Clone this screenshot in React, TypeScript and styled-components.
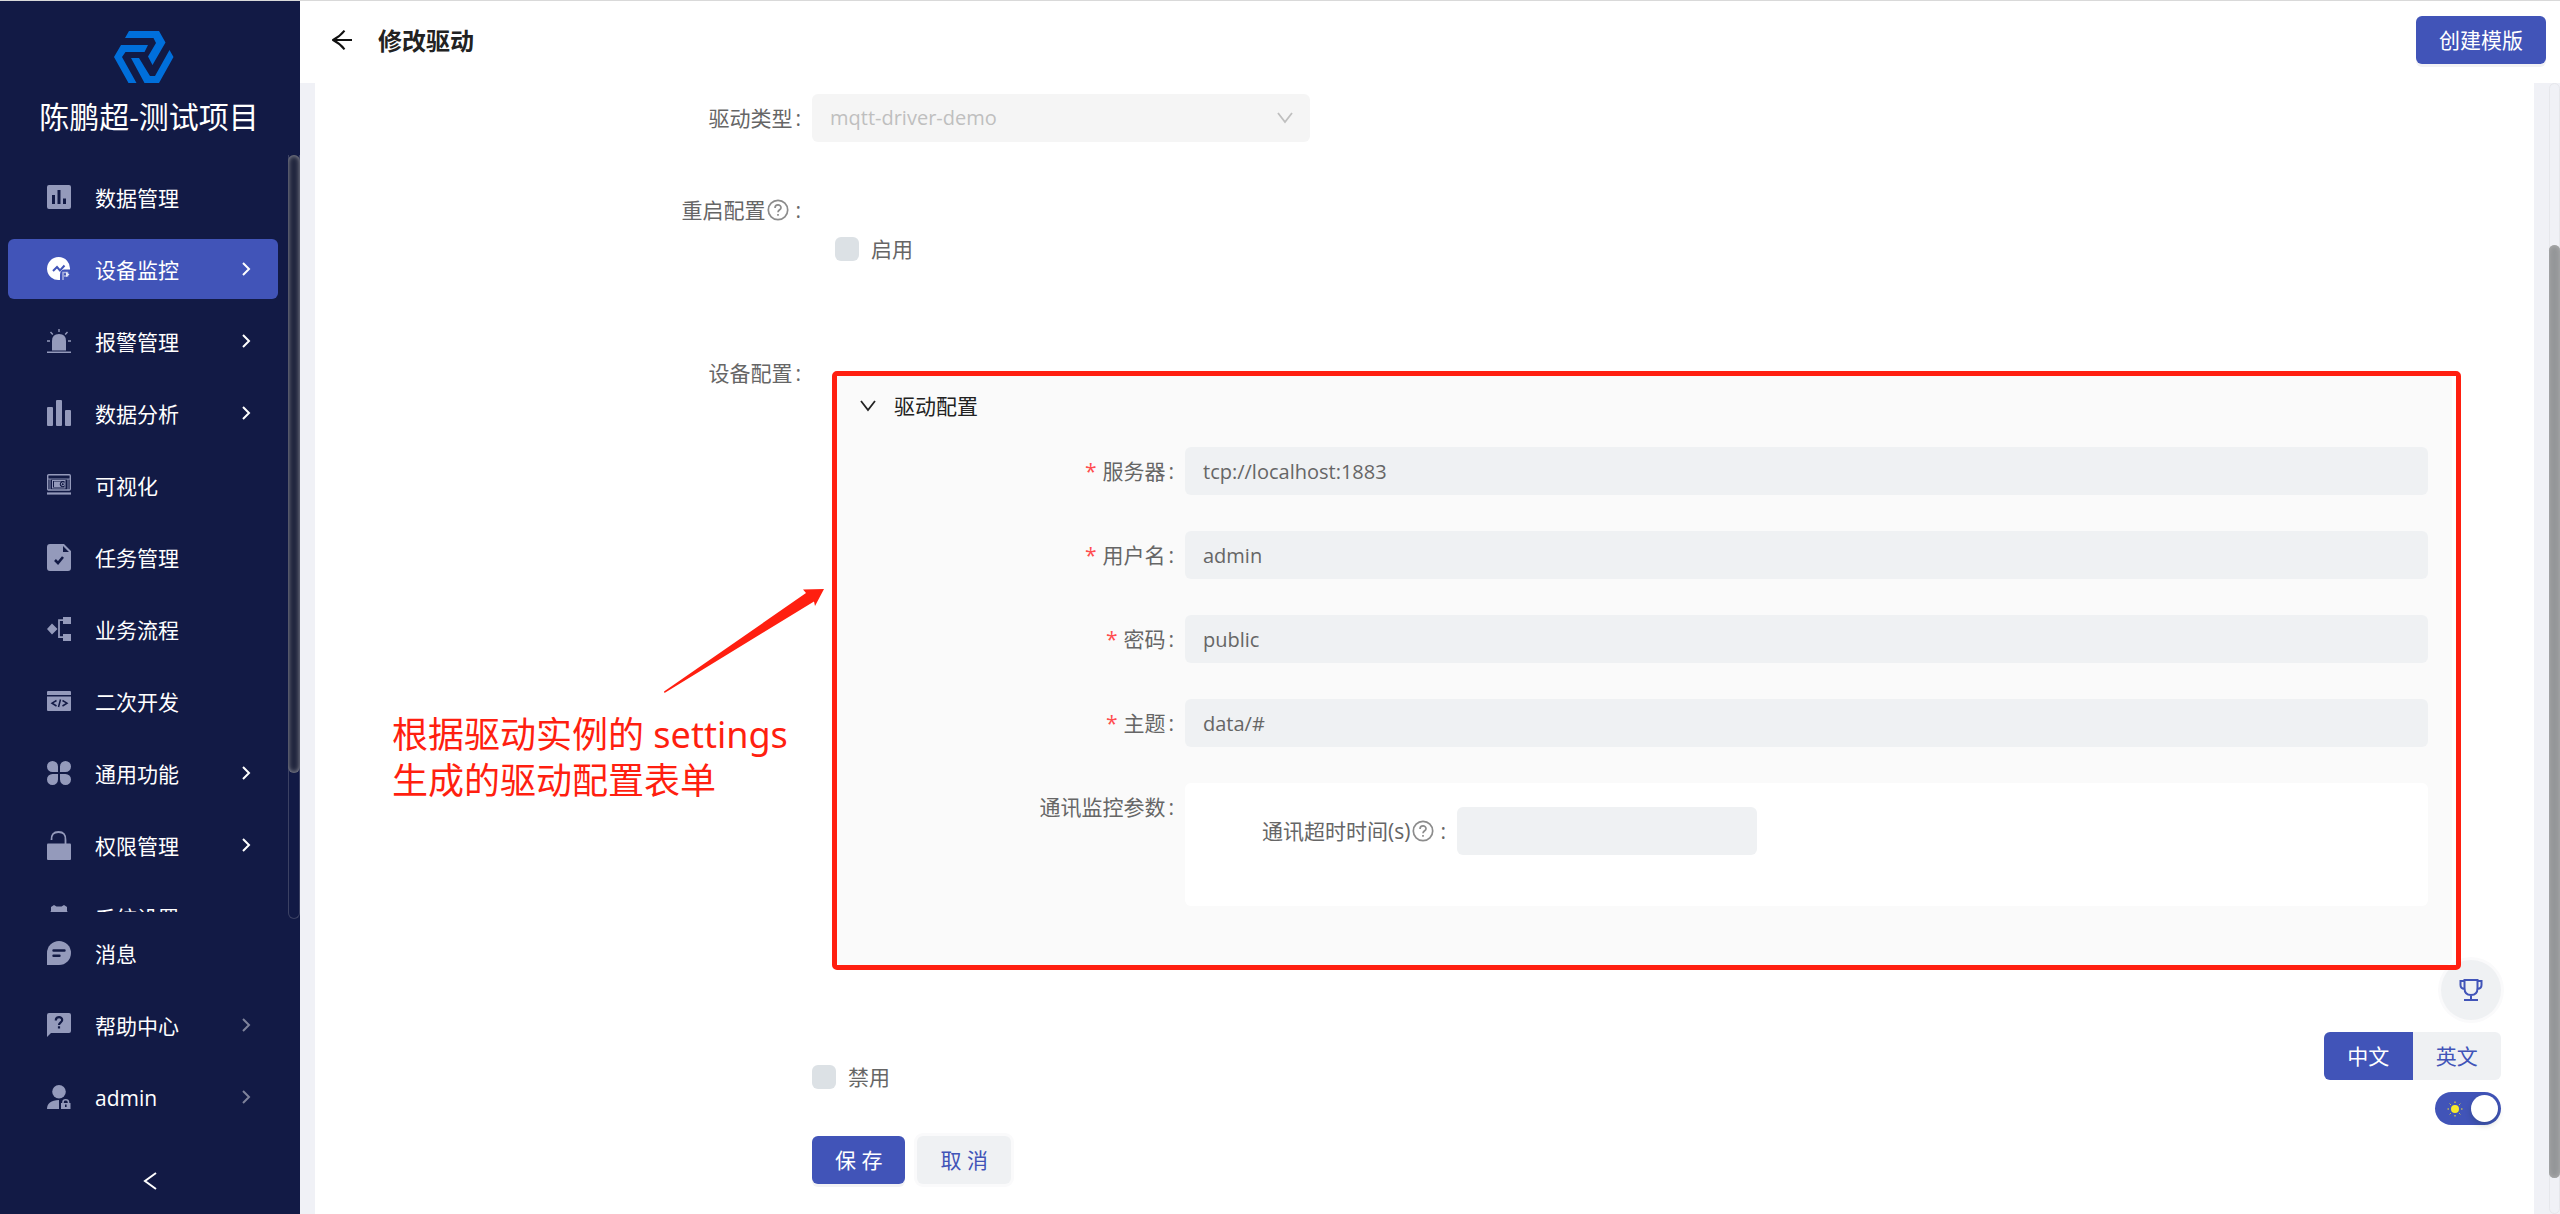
import React from "react";
import styled, { createGlobalStyle, css } from "styled-components";

const color = {
  navy: "#121a45",
  primary: "#4154b8",
  icon: "#949abb",
  page: "#f0f1f6",
  field: "#eff1f3",
  text: "#666666",
  heading: "#222222",
  mark: "#ff1f10",
};

const GlobalStyle = createGlobalStyle`
  *, *::before, *::after { box-sizing: border-box; }
  body {
    margin: 0;
    background: #fff;
    color: ${color.text};
    font-family: "Open Sans", "Noto Sans CJK SC", sans-serif;
    font-size: 21px;
    line-height: 32px;
  }
  button, input, select { font: inherit; color: inherit; margin: 0; }
  button { cursor: pointer; }
  svg { display: block; flex: none; }
`;

/* ---------- shell ---------- */

const Shell = styled.div`
  display: flex;
  height: 100vh;
  border-top: 1px solid #d9d9d9;
  overflow: hidden;
`;

const Sidebar = styled.aside`
  flex: 0 0 300px;
  display: flex;
  flex-direction: column;
  background: ${color.navy};
  color: #fff;
`;

const Brand = styled.div`
  display: flex;
  flex-direction: column;
  align-items: center;
  gap: 12px;
  height: 154px;
  padding: 30px 2px 0 0;
`;

const BrandName = styled.div`
  font-size: 30px;
  line-height: 44px;
  white-space: nowrap;
`;

const NavArea = styled.div`
  flex: 1;
  min-height: 0;
  display: flex;
`;

const MenuList = styled.nav`
  flex: 1;
  display: flex;
  flex-direction: column;
  gap: 12px;
  padding: 12px 10px 0 8px;
  overflow: hidden;
`;

const MenuItem = styled.a<{ $active?: boolean }>`
  flex: 0 0 60px;
  display: flex;
  align-items: center;
  padding: 0 27px 0 39px;
  border-radius: 6px;
  color: #fff;
  text-decoration: none;
  white-space: nowrap;
  background: ${(p) => (p.$active ? color.primary : "transparent")};
`;

const MenuIcon = styled.span<{ $active?: boolean }>`
  width: 24px;
  color: ${(p) => (p.$active ? "#fff" : color.icon)};
`;

const MenuText = styled.span`
  flex: 1;
  margin-left: 24px;
  padding-top: 2px;
`;

const NavTrack = styled.div`
  flex: 0 0 12px;
  display: flex;
  flex-direction: column;
  border: 1px solid #3b4163;
  border-top: 0;
  border-radius: 0 0 6px 6px;
  margin-bottom: -7px;
`;

const NavThumb = styled.div`
  flex: 0 0 81%;
  margin: 0 -1px;
  border-radius: 6px;
  background: #22273f;
  box-shadow: inset 0 0 5px #a0a0a8;
`;

const MenuFooter = styled.div`
  display: flex;
  flex-direction: column;
  gap: 12px;
  padding: 11px 22px 0 8px;
`;

const Collapse = styled.button`
  height: 75px;
  border: 0;
  background: transparent;
  color: #fff;
  display: flex;
  align-items: center;
  justify-content: center;
  padding: 9px 0 0 14px;
`;

const Main = styled.main`
  flex: 1;
  min-width: 0;
  display: flex;
  flex-direction: column;
`;

const Header = styled.header`
  flex: 0 0 82px;
  display: flex;
  align-items: center;
  padding: 0 14px 4px 32px;
  background: #fff;
`;

const BackButton = styled.button`
  border: 0;
  padding: 0;
  background: transparent;
  color: #111;
`;

const Title = styled.h1`
  flex: 1;
  margin: 0 0 0 26px;
  padding-top: 2px;
  font-size: 24px;
  font-weight: 700;
  color: ${color.heading};
`;

const Button = styled.button<{ $primary?: boolean }>`
  height: 48px;
  padding: 0 23px;
  border: 0;
  border-radius: 6px;
  white-space: nowrap;
  background: ${(p) => (p.$primary ? color.primary : color.field)};
  color: ${(p) => (p.$primary ? "#fff" : color.primary)};
  box-shadow: ${(p) => (p.$primary ? "0 3px 0 #f2f2f4" : "0 0 0 3px #fafafb")};
`;

const Body = styled.div`
  flex: 1;
  min-height: 0;
  display: flex;
  background: ${color.page};
`;

const Sheet = styled.form`
  flex: 1;
  min-width: 0;
  display: flex;
  flex-direction: column;
  gap: 44px;
  margin: 0 15px;
  padding: 11px 0;
  background: #fff;
`;

const PageTrack = styled.div`
  flex: 0 0 11px;
  display: flex;
  flex-direction: column;
  border: 1px solid #e6e7eb;
  border-radius: 6px;
`;

const PageThumb = styled.div`
  flex: 935;
  margin: 0 -1px;
  border-radius: 6px;
  background: #949698;
  box-shadow: inset 0 0 5px #b0b0b0;
`;

const Spacer = styled.div<{ $grow: number }>`
  flex: ${(p) => p.$grow};
`;

/* ---------- form ---------- */

const Row = styled.div<{ $label?: number }>`
  display: grid;
  grid-template-columns: minmax(180px, ${(p) => p.$label ?? 497}px) minmax(0, 1fr);
`;

const labelStyle = css`
  height: 48px;
  display: flex;
  align-items: center;
  justify-content: flex-end;
  padding-right: 11px;
  white-space: nowrap;
`;

const FieldLabel = styled.label`
  ${labelStyle}
`;

const FieldCaption = styled.span`
  ${labelStyle}
`;

const Required = styled.span`
  margin-right: 6px;
  color: #ff4d4f;
`;

const Colon = styled.span`
  margin-left: 3px;
`;

const HelpMark = styled.span`
  margin: 0 3px 0 2px;
  color: #8c8c8c;
`;

const SelectBox = styled.div`
  display: flex;
  align-items: center;
  width: 498px;
  height: 48px;
  padding-right: 17px;
  border-radius: 6px;
  background: #f5f5f5;
  color: #bfbfbf;
`;

const Select = styled.select`
  flex: 1;
  height: 48px;
  padding: 0 18px;
  border: 0;
  background: transparent;
  appearance: none;
  font-size: 20px;
  color: #bfbfbf;
  opacity: 1;
`;

const Input = styled.input`
  width: 100%;
  height: 48px;
  padding: 0 18px;
  border: 0;
  border-radius: 6px;
  background: ${color.field};
  font-size: 20px;
`;

const CheckLabel = styled.label`
  display: flex;
  align-items: center;
  gap: 12px;
  height: 48px;
`;

const Check = styled.input`
  appearance: none;
  width: 24px;
  height: 24px;
  border-radius: 6px;
  background: #dce1e5;
`;

const RestartBody = styled.div`
  padding: 39px 0 32px 23px;
`;

const PanelArea = styled.div`
  padding: 24px 82px 44px 24px;
`;

const Panel = styled.section`
  position: relative;
  border-radius: 6px;
  background: #fafafa;
  color: ${color.text};
`;

const PanelHead = styled.button`
  display: flex;
  align-items: center;
  gap: 18px;
  width: 100%;
  height: 66px;
  padding: 0 24px;
  border: 0;
  background: transparent;
  color: ${color.heading};
  text-align: left;
`;

const PanelBody = styled.div`
  display: flex;
  flex-direction: column;
  gap: 36px;
  padding: 8px 24px 59px 0;
`;

const SubCard = styled.div`
  padding: 24px 24px 51px 0;
  border-radius: 6px;
  background: #fff;
`;

const ShortField = styled.div`
  width: 300px;
`;

const Actions = styled.div`
  display: flex;
  flex-direction: column;
  gap: 35px;
`;

const ButtonRow = styled.div`
  display: flex;
  gap: 12px;
`;

/* ---------- red callout laid over the form ---------- */

const Outline = styled.div`
  position: absolute;
  z-index: 10;
  inset: -2px -9px -5px -4px;
  border: 5px solid ${color.mark};
  border-radius: 5px;
  pointer-events: none;
`;

const Arrow = styled.svg`
  position: absolute;
  left: -172px;
  top: 215px;
`;

const Note = styled.p`
  position: absolute;
  left: -444px;
  top: 339px;
  margin: 0;
  font-family: "Noto Sans", "Noto Sans CJK SC", sans-serif;
  font-size: 36px;
  line-height: 46px;
  white-space: nowrap;
  color: ${color.mark};
`;

/* ---------- floating tools ---------- */

const Floating = styled.div`
  position: fixed;
  z-index: 5;
  right: 59px;
  bottom: 89px;
  display: flex;
  flex-direction: column;
  align-items: flex-end;
  gap: 12px;
`;

const RoundButton = styled.button`
  width: 60px;
  height: 60px;
  display: flex;
  align-items: center;
  justify-content: center;
  border: 0;
  border-radius: 50%;
  background: ${color.field};
  color: ${color.primary};
  box-shadow: 0 0 0 3px #fafafb;
`;

const LangGroup = styled.div`
  display: flex;
  width: 177px;
  border-radius: 6px;
  overflow: hidden;
`;

const LangButton = styled.button<{ $on?: boolean }>`
  flex: 1;
  height: 48px;
  padding: 0;
  border: 0;
  background: ${(p) => (p.$on ? color.primary : color.field)};
  color: ${(p) => (p.$on ? "#fff" : color.primary)};
`;

const Switch = styled.button`
  width: 66px;
  height: 33px;
  display: flex;
  align-items: center;
  justify-content: space-between;
  padding: 0 3px 0 12px;
  border: 0;
  border-radius: 17px;
  background: ${color.primary};
`;

const Knob = styled.span`
  width: 27px;
  height: 27px;
  border-radius: 50%;
  background: #fff;
  box-shadow: 0 3px 6px rgba(0, 35, 11, 0.2);
`;

/* ---------- drawings ---------- */

const Logo = () => (
  <svg width="70" height="52" viewBox="0 0 70 52" fill="#006fdb">
    <path d="M15 0H45L51.500 11.500L38.500 34L34 25.500L42 12L39.500 7H11Z" />
    <path d="M7 14H34L30.500 21H11.500L8 26L22.500 52H14.500L0 26Z" />
    <path d="M17 27H25L36 45H41L55.500 19L59.500 26L45 52H30.500Z" />
  </svg>
);

const Chevron = ({ tone = "#fff" }: { tone?: string }) => (
  <svg width="10" height="14" viewBox="0 0 10 14" fill="none" stroke={tone} strokeWidth="2">
    <path d="M2 1L8 7L2 13" />
  </svg>
);

const Down = () => (
  <svg width="16" height="16" viewBox="0 0 16 16" fill="none" stroke="currentColor" strokeWidth="1.800">
    <path d="M1 3L8 12L15 3" />
  </svg>
);

const Question = () => (
  <svg width="22" height="22" viewBox="0 0 22 22" fill="none" stroke="currentColor" strokeWidth="1.700">
    <circle cx="11" cy="11" r="9.700" />
    <path d="M8 9C8 5 14 5 14 8.700C14 10.800 11 10.800 11 13.300" />
    <path d="M11 15V16.800" />
  </svg>
);

const icons: Record<string, React.ReactNode> = {
  data: (
    <svg width="24" height="24" viewBox="0 0 24 24" fill="currentColor">
      <path fillRule="evenodd" d="M2 0H22Q24 0 24 2V22Q24 24 22 24H2Q0 24 0 22V2Q0 0 2 0ZM5 10V19H8V10ZM10.500 5V19H13.500V5ZM16 13.500V19H19V13.500Z" />
    </svg>
  ),
  device: (
    <svg width="24" height="24" viewBox="0 0 24 24" fill="none">
      <path fill="currentColor" d="M13 23A11.500 11.500 0 1 1 23 12.500H17Q13 13 13 18Z" />
      <path d="M6 14L10 10L13 13.500L17.500 8.500" stroke={color.primary} strokeWidth="2" />
      <path d="M16 23V15.500H20.500V19H17" stroke="#aab3de" strokeWidth="1.500" />
      <path d="M19 15L22.500 17.500L19 20Z" fill="#e5e8f6" />
    </svg>
  ),
  alarm: (
    <svg width="24" height="24" viewBox="0 0 24 24" fill="none" stroke="currentColor" strokeWidth="1.400">
      <path fill="currentColor" stroke="none" d="M5 21.500V12Q5 5 12 5T19 12V21.500Z" />
      <path d="M0 23.200H24M12 0V3M3.500 3L5.800 5.500M20.500 3L18.200 5.500M0 12H3M21 12H24" />
    </svg>
  ),
  chart: (
    <svg width="24" height="26" viewBox="0 0 24 26" fill="currentColor">
      <rect y="7" width="6" height="19" rx="1" />
      <rect x="9" width="6" height="26" rx="1" />
      <rect x="18" y="10" width="6" height="16" rx="1" />
    </svg>
  ),
  visual: (
    <svg width="24" height="22" viewBox="0 0 24 22" fill="none" stroke="currentColor">
      <rect x="0.700" y="0.700" width="22.600" height="15.300" rx="1" strokeWidth="1.400" />
      <path d="M1 5H23M3 5V16M21 5V16" strokeWidth="0.900" />
      <rect x="5.500" y="6.500" width="12.500" height="7.500" strokeWidth="1" />
      <path fill="currentColor" stroke="none" d="M7 7.500H14.500A3 3 0 0 0 14.500 13H7Z" />
      <circle cx="15.800" cy="10.200" r="1.500" strokeWidth="1" />
      <path d="M0 19.500H24" strokeWidth="2.200" />
    </svg>
  ),
  task: (
    <svg width="24" height="27" viewBox="0 0 24 27" fill="none">
      <path fill="currentColor" fillRule="evenodd" d="M3 0H17L24 7V24Q24 27 21 27H3Q0 27 0 24V3Q0 0 3 0ZM16 2V8H22Z" />
      <path d="M8 16L11 19L16 13" stroke={color.navy} strokeWidth="2.600" />
    </svg>
  ),
  flow: (
    <svg width="24" height="24" viewBox="0 0 24 24" fill="currentColor">
      <path d="M5 6.500L10.500 12L5 17.500L0 12ZM16 0H24V7H16ZM16 17H24V24H16Z" />
      <path d="M16 3.200H12V20.200H16" fill="none" stroke="currentColor" strokeWidth="1.800" />
    </svg>
  ),
  code: (
    <svg width="24" height="20" viewBox="0 0 24 20" fill="none">
      <path fill="currentColor" d="M1 0H23Q24 0 24 1V4H0V1Q0 0 1 0ZM0 5.500H24V19Q24 20 23 20H1Q0 20 0 19Z" />
      <path d="M9.500 9.500L5 12.200L9.500 15M15.500 9.500L20 12.200L15.500 15M13.500 8.500L11.500 16" stroke={color.navy} strokeWidth="1.500" />
    </svg>
  ),
  clover: (
    <svg width="24" height="24" viewBox="0 0 24 24" fill="currentColor">
      <path d="M5.500 0A5.500 5.500 0 0 1 11 5.500V11H5.500A5.500 5.500 0 0 1 5.500 0ZM18.500 0A5.500 5.500 0 0 1 18.500 11H13V5.500A5.500 5.500 0 0 1 18.500 0ZM5.500 13H11V18.500A5.500 5.500 0 1 1 5.500 13ZM13 13H18.500A5.500 5.500 0 1 1 13 18.500Z" />
    </svg>
  ),
  lock: (
    <svg width="24" height="29" viewBox="0 0 24 29" fill="currentColor">
      <rect y="12.500" width="24" height="16.500" rx="1" />
      <path d="M4.500 9Q4 1 11.500 1T18.500 9V13" fill="none" stroke="currentColor" strokeWidth="1.800" />
    </svg>
  ),
  gear: (
    <svg width="24" height="24" viewBox="0 0 24 24" fill="currentColor">
      <path fillRule="evenodd" d="M7 0L9.500 1.500H14.500L17 0L20 2V6L24 12L20 18V22L17 24L14.500 22.500H9.500L7 24L4 22V18L0 12L4 6V2ZM12 8A4 4 0 1 0 12 16A4 4 0 1 0 12 8Z" />
    </svg>
  ),
  message: (
    <svg width="24" height="24" viewBox="0 0 24 24" fill="none">
      <path fill="currentColor" d="M0 24V12A12 12 0 1 1 12 24Z" />
      <path d="M6.500 9.500H17.500M6.500 14.800H12.500" stroke={color.navy} strokeWidth="2.400" strokeLinecap="round" />
    </svg>
  ),
  help: (
    <svg width="24" height="24" viewBox="0 0 24 24" fill="none">
      <path fill="currentColor" d="M2 0H22Q24 0 24 2V18Q24 20 22 20H4L0 24V2Q0 0 2 0Z" />
      <path d="M8.800 7.500C8.800 3.200 15.200 3.200 15.200 7C15.200 9.300 12 9.300 12 12M12 13.200V15.600" stroke={color.navy} strokeWidth="2.200" />
    </svg>
  ),
  user: (
    <svg width="24" height="24" viewBox="0 0 24 24" fill="currentColor">
      <circle cx="12" cy="6.800" r="6.800" />
      <path d="M0 24Q0 15.500 12 15V24ZM14 18H23.500V24H14Z" />
      <path d="M16 18.500V17Q16 14.800 18.700 14.800T21.500 17V18.500" fill="none" stroke="currentColor" strokeWidth="1.600" />
      <rect x="18" y="19.500" width="1.600" height="2.500" fill={color.navy} />
    </svg>
  ),
};

/* ---------- data ---------- */

type Entry = { icon: string; text: string; more?: boolean; active?: boolean };

const menu: Entry[] = [
  { icon: "data", text: "数据管理" },
  { icon: "device", text: "设备监控", more: true, active: true },
  { icon: "alarm", text: "报警管理", more: true },
  { icon: "chart", text: "数据分析", more: true },
  { icon: "visual", text: "可视化" },
  { icon: "task", text: "任务管理" },
  { icon: "flow", text: "业务流程" },
  { icon: "code", text: "二次开发" },
  { icon: "clover", text: "通用功能", more: true },
  { icon: "lock", text: "权限管理", more: true },
  { icon: "gear", text: "系统设置" },
];

const footerMenu: Entry[] = [
  { icon: "message", text: "消息" },
  { icon: "help", text: "帮助中心", more: true },
  { icon: "user", text: "admin", more: true },
];

const settings = [
  { id: "server", label: "服务器", value: "tcp://localhost:1883" },
  { id: "username", label: "用户名", value: "admin" },
  { id: "password", label: "密码", value: "public" },
  { id: "topic", label: "主题", value: "data/#" },
];

const Item = ({ entry, tone }: { entry: Entry; tone?: string }) => (
  <MenuItem href="#" $active={entry.active}>
    <MenuIcon $active={entry.active}>{icons[entry.icon]}</MenuIcon>
    <MenuText>{entry.text}</MenuText>
    {entry.more && <Chevron tone={tone} />}
  </MenuItem>
);

export default function App() {
  return (
    <>
      <GlobalStyle />
      <Shell>
        <Sidebar>
          <Brand>
            <Logo />
            <BrandName>陈鹏超-测试项目</BrandName>
          </Brand>
          <NavArea>
            <MenuList>
              {menu.map((m) => (
                <Item key={m.text} entry={m} />
              ))}
            </MenuList>
            <NavTrack>
              <NavThumb />
            </NavTrack>
          </NavArea>
          <MenuFooter>
            {footerMenu.map((m) => (
              <Item key={m.text} entry={m} tone="#7f839b" />
            ))}
            <Collapse type="button" aria-label="收起菜单">
              <svg width="14" height="18" viewBox="0 0 14 18" fill="none" stroke="currentColor" strokeWidth="2">
                <path d="M13 1L2 9L13 17" />
              </svg>
            </Collapse>
          </MenuFooter>
        </Sidebar>

        <Main>
          <Header>
            <BackButton type="button" aria-label="返回">
              <svg width="20" height="20" viewBox="0 0 20 20" fill="none" stroke="currentColor" strokeWidth="2">
                <path d="M1 10H20M12.500 0.700Q8 6.500 1 10Q8 13.500 12.500 19.300" />
              </svg>
            </BackButton>
            <Title>修改驱动</Title>
            <Button type="button" $primary>
              创建模版
            </Button>
          </Header>

          <Body>
            <Sheet>
              <Row>
                <FieldLabel htmlFor="driver-type">
                  驱动类型<Colon>:</Colon>
                </FieldLabel>
                <SelectBox>
                  <Select id="driver-type" disabled defaultValue="mqtt-driver-demo">
                    <option>mqtt-driver-demo</option>
                  </Select>
                  <Down />
                </SelectBox>
              </Row>

              <Row>
                <FieldCaption>
                  重启配置
                  <HelpMark>
                    <Question />
                  </HelpMark>
                  <Colon>:</Colon>
                </FieldCaption>
                <RestartBody>
                  <CheckLabel>
                    <Check type="checkbox" />
                    启用
                  </CheckLabel>
                </RestartBody>
              </Row>

              <Row>
                <FieldCaption>
                  设备配置<Colon>:</Colon>
                </FieldCaption>
                <PanelArea>
                  <Panel>
                    <PanelHead type="button">
                      <Down />
                      驱动配置
                    </PanelHead>
                    <PanelBody>
                      {settings.map((s) => (
                        <Row key={s.id} $label={349}>
                          <FieldLabel htmlFor={s.id}>
                            <Required>*</Required>
                            {s.label}
                            <Colon>:</Colon>
                          </FieldLabel>
                          <Input id={s.id} type="text" defaultValue={s.value} />
                        </Row>
                      ))}
                      <Row $label={349}>
                        <FieldCaption>
                          通讯监控参数<Colon>:</Colon>
                        </FieldCaption>
                        <SubCard>
                          <Row $label={272}>
                            <FieldLabel htmlFor="timeout">
                              通讯超时时间(s)
                              <HelpMark>
                                <Question />
                              </HelpMark>
                              <Colon>:</Colon>
                            </FieldLabel>
                            <ShortField>
                              <Input id="timeout" type="text" />
                            </ShortField>
                          </Row>
                        </SubCard>
                      </Row>
                    </PanelBody>
                    <Outline />
                    <Arrow width="162" height="106" viewBox="0 0 162 106" fill={color.mark}>
                      <path d="M0 103.500L142 5L139 1.500L160 1L151 18L150 13.500L0.500 105Z" />
                    </Arrow>
                    <Note>
                      根据驱动实例的 settings
                      <br />
                      生成的驱动配置表单
                    </Note>
                  </Panel>
                </PanelArea>
              </Row>

              <Row>
                <span />
                <Actions>
                  <CheckLabel>
                    <Check type="checkbox" />
                    禁用
                  </CheckLabel>
                  <ButtonRow>
                    <Button type="button" $primary>
                      保 存
                    </Button>
                    <Button type="button">取 消</Button>
                  </ButtonRow>
                </Actions>
              </Row>
            </Sheet>
            <PageTrack>
              <Spacer $grow={161} />
              <PageThumb />
              <Spacer $grow={35} />
            </PageTrack>
          </Body>
        </Main>
      </Shell>

      <Floating>
        <RoundButton type="button" aria-label="成就">
          <svg width="24" height="24" viewBox="0 0 24 24" fill="none" stroke="currentColor" strokeWidth="2">
            <path d="M5.500 2H18.500V10Q18.500 17 12 17T5.500 10ZM12 17V22M5 22H19M5.500 3H1.500V7Q1.500 10.500 5.500 11M18.500 3H22.500V7Q22.500 10.500 18.500 11" />
          </svg>
        </RoundButton>
        <LangGroup>
          <LangButton type="button" $on>
            中文
          </LangButton>
          <LangButton type="button">英文</LangButton>
        </LangGroup>
        <Switch type="button" role="switch" aria-checked="true" aria-label="浅色主题">
          <svg width="16" height="16" viewBox="0 0 16 16" fill="#f8ea2c" stroke="#f8ea2c">
            <circle cx="8" cy="8" r="4" stroke="none" />
            <path d="M8 0.500V2M8 14V15.500M0.500 8H2M14 8H15.500M2.700 2.700L3.700 3.700M12.300 12.300L13.300 13.300M13.300 2.700L12.300 3.700M3.700 12.300L2.700 13.300" />
          </svg>
          <Knob />
        </Switch>
      </Floating>
    </>
  );
}
